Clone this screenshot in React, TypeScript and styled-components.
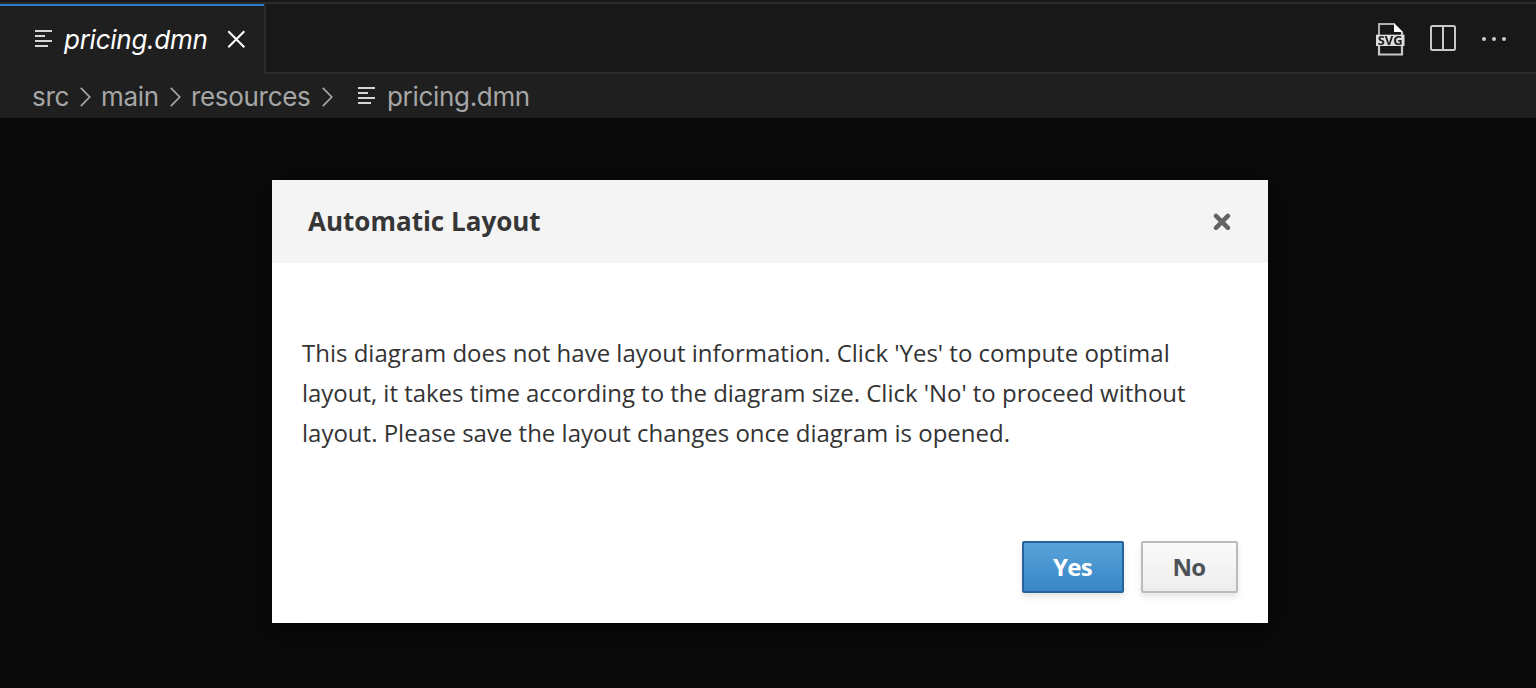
import React from "react";
import styled, { createGlobalStyle } from "styled-components";

const GlobalStyle = createGlobalStyle`
  * { box-sizing: border-box; }
  body { margin: 0; background: #0a0a0a; overflow: hidden; }
  button { font: inherit; cursor: pointer; }
`;

const Editor = styled.div`
  display: flex;
  flex-direction: column;
  width: 100%;
  height: 688px;
  background: #0a0a0a;
  font-family: Inter, "Liberation Sans", sans-serif;
`;

const TabBar = styled.header`
  display: flex;
  height: 74px;
  padding-top: 2px;
  background: #181818;
`;

const TabStrip = styled.div`
  display: flex;
  flex: 1;
  border-top: 2px solid #2b2b2b;
`;

const Tab = styled.div`
  width: 266px;
  background: #1f1f1f;
  border-right: 2px solid #2b2b2b;
  color: #fff;
`;

const TabContent = styled.div`
  display: flex;
  align-items: center;
  height: 70px;
  padding: 0 0 2px 34px;
  border-top: 2px solid #2f7bd0;
`;

const TabActions = styled.div`
  display: flex;
  flex: 1;
  align-items: center;
  justify-content: flex-end;
  padding-right: 30px;
  border-bottom: 2px solid #2b2b2b;
`;

const Label = styled.span<{ $width: number; $italic?: boolean }>`
  width: ${(p) => p.$width}px;
  flex: none;
  padding-top: ${(p) => (p.$italic ? 2 : 0)}px;
  white-space: nowrap;
  font-size: 26px;
  line-height: 32px;
  font-weight: ${(p) => (p.$italic ? 450 : 440)};
  font-style: ${(p) => (p.$italic ? "italic" : "normal")};
  letter-spacing: ${(p) => (p.$italic ? -0.27 : -0.32)}px;
`;

const IconButton = styled.button<{ $gap?: number }>`
  display: flex;
  flex: none;
  margin: 0 0 0 ${(p) => p.$gap ?? 0}px;
  padding: 0;
  border: 0;
  background: none;
  color: inherit;
`;

const Breadcrumbs = styled.nav`
  display: flex;
  align-items: center;
  height: 44px;
  padding: 2px 0 0 32px;
  background: #1f1f1f;
  color: #a6a6a6;
`;

const Separator = styled.span<{ $after: number }>`
  display: flex;
  flex: none;
  margin: 0 ${(p) => p.$after}px 1px 11px;
`;

const FileIconBox = styled.span<{ $raised?: boolean }>`
  display: flex;
  flex: none;
  margin-right: 12px;
  margin-bottom: ${(p) => (p.$raised ? 2 : 0)}px;
  color: #d4d7d6;
`;

const Canvas = styled.main`
  flex: 1;
  padding: 62px 268px 0 272px;
`;

const Dialog = styled.section`
  display: flex;
  flex-direction: column;
  height: 443px;
  background: #fff;
  color: #333;
  font-family: "Open Sans", "Noto Sans", sans-serif;
  box-shadow: 0 8px 28px rgba(0, 0, 0, 0.6);
`;

const DialogHeader = styled.div`
  display: flex;
  align-items: center;
  justify-content: space-between;
  height: 83px;
  padding: 0 37px 0 36px;
  background: #f4f4f4;
  color: #636363;
`;

const Title = styled.h1`
  margin: 0;
  padding-bottom: 2px;
  color: #363636;
  font-size: 26px;
  line-height: 36px;
  font-weight: 700;
`;

const Message = styled.p`
  flex: 1;
  margin: 0;
  padding: 70px 30px 0;
  font-size: 24px;
  line-height: 40px;
  white-space: nowrap;
`;

const MessageLine = styled.span<{ $tight?: boolean }>`
  display: block;
  letter-spacing: ${(p) => (p.$tight ? "-0.025px" : "normal")};
`;

const DialogFooter = styled.div`
  display: flex;
  justify-content: flex-end;
  gap: 17px;
  padding: 0 30px 30px;
`;

const Action = styled.button<{ $primary?: boolean }>`
  width: ${(p) => (p.$primary ? 102 : 97)}px;
  height: 52px;
  padding: 0 1px 0 0;
  border: 2px solid ${(p) => (p.$primary ? "#27639b" : "#bbb")};
  border-radius: 2px;
  background: ${(p) =>
    p.$primary ? "linear-gradient(#58a3d7, #3986c8)" : "linear-gradient(#fafafa, #ededed)"};
  color: ${(p) => (p.$primary ? "#fff" : "#4d5258")};
  box-shadow: 0 4px 6px rgba(3, 3, 3, 0.1);
  font-size: 24px;
  line-height: 34px;
  font-weight: 700;
  letter-spacing: -0.7px;
`;

const FileLines = () => (
  <svg width="18" height="20" viewBox="0 0 18 20" fill="currentColor">
    <path d="M1 1h17v2H1zM1 6h10v2H1zM1 11h17v2H1zM1 16h13v2H1z" />
  </svg>
);

const Chevron = () => (
  <svg width="11" height="20" viewBox="0 0 11 20" fill="none" stroke="currentColor" strokeWidth="1.7">
    <path d="M.8.800 9.700 10 .8 19.200" />
  </svg>
);

const TabClose = () => (
  <svg width="20" height="20" viewBox="0 0 20 20" stroke="currentColor" strokeWidth="2">
    <path d="m2.300 2.300 16 16M18.300 2.300l-16 16" />
  </svg>
);

const SvgFile = () => (
  <svg width="30" height="36" viewBox="0 0 30 36" style={{ filter: "blur(0.5px)" }}>
    <path d="M4 15V4h15.500" fill="none" stroke="#b0b0b0" strokeWidth="2" />
    <path d="M4 25v9.500h23V25M27 12v3" fill="none" stroke="#c8c8c8" strokeWidth="2.2" />
    <path d="M19 3v9h9z" fill="#fff" />
    <rect x="1" y="14.700" width="28.500" height="11.300" fill="#dedede" />
    <text x="15.200" y="25" textAnchor="middle" textLength="25" lengthAdjust="spacingAndGlyphs"
      fontFamily="Open Sans, sans-serif" fontSize="12" fontWeight="700" fill="#202020">SVG</text>
  </svg>
);

const SplitEditor = () => (
  <svg width="26" height="26" viewBox="0 0 26 26" fill="none" stroke="#c9c9c9" strokeWidth="2">
    <rect x="1" y="1" width="24" height="24" rx="1.500" />
    <path d="M13 1v24" />
  </svg>
);

const More = () => (
  <svg width="25" height="8" viewBox="0 0 25 8" fill="#c9c9c9">
    <circle cx="3" cy="5" r="2" />
    <circle cx="13" cy="5" r="2" />
    <circle cx="23" cy="5" r="2" />
  </svg>
);

const DialogClose = () => (
  <svg width="18" height="17" viewBox="0 0 18 17" stroke="currentColor" strokeWidth="4.500" strokeLinecap="round">
    <path d="m3 2.900 11.900 11.900M14.900 2.900 3 14.800" />
  </svg>
);

export default function App() {
  return (
    <Editor>
      <GlobalStyle />
      <TabBar>
        <TabStrip>
          <Tab>
            <TabContent>
              <FileIconBox><FileLines /></FileIconBox>
              <Label $width={162} $italic>pricing.dmn</Label>
              <IconButton aria-label="Close tab"><TabClose /></IconButton>
            </TabContent>
          </Tab>
          <TabActions>
            <IconButton aria-label="Export SVG"><SvgFile /></IconButton>
            <IconButton $gap={25} aria-label="Split editor"><SplitEditor /></IconButton>
            <IconButton $gap={25} aria-label="More actions"><More /></IconButton>
          </TabActions>
        </TabStrip>
      </TabBar>
      <Breadcrumbs>
        <Label $width={37}>src</Label>
        <Separator $after={10}><Chevron /></Separator>
        <Label $width={58}>main</Label>
        <Separator $after={10}><Chevron /></Separator>
        <Label $width={120}>resources</Label>
        <Separator $after={24}><Chevron /></Separator>
        <FileIconBox $raised><FileLines /></FileIconBox>
        <Label $width={144}>pricing.dmn</Label>
      </Breadcrumbs>
      <Canvas>
        <Dialog role="dialog" aria-label="Automatic Layout">
          <DialogHeader>
            <Title>Automatic Layout</Title>
            <IconButton aria-label="Close dialog"><DialogClose /></IconButton>
          </DialogHeader>
          <Message>
            <MessageLine>This diagram does not have layout information. Click 'Yes' to compute optimal</MessageLine>
            <MessageLine $tight>layout, it takes time according to the diagram size. Click 'No' to proceed without</MessageLine>
            <MessageLine>layout. Please save the layout changes once diagram is opened.</MessageLine>
          </Message>
          <DialogFooter>
            <Action $primary>Yes</Action>
            <Action>No</Action>
          </DialogFooter>
        </Dialog>
      </Canvas>
    </Editor>
  );
}
